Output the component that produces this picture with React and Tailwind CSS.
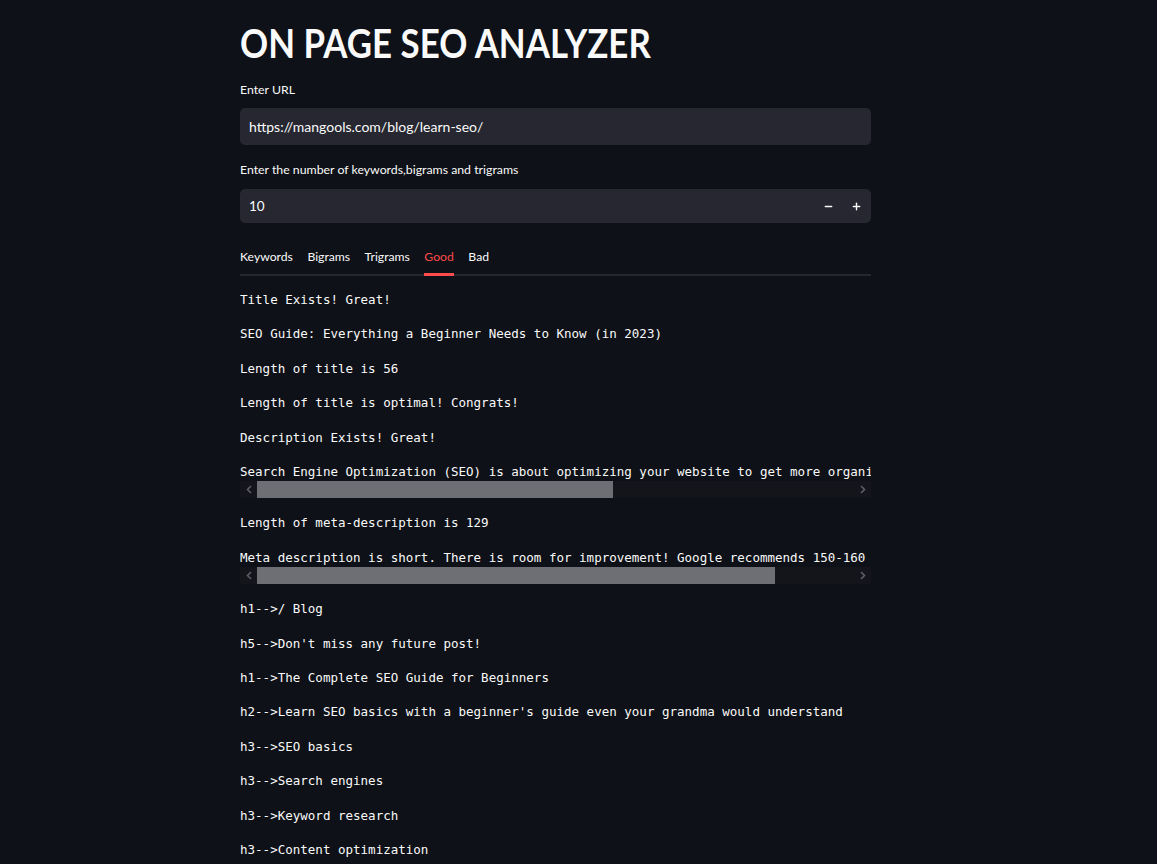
import { Minus, Plus } from 'lucide-react'

const TABS = ['Keywords', 'Bigrams', 'Trigrams', 'Good', 'Bad']

const LINES = [
  { text: 'Title Exists! Great!' },
  { text: 'SEO Guide: Everything a Beginner Needs to Know (in 2023)' },
  { text: 'Length of title is 56' },
  { text: 'Length of title is optimal! Congrats!' },
  { text: 'Description Exists! Great!' },
  {
    text: 'Search Engine Optimization (SEO) is about optimizing your website to get more organic traffic from search engines like Google.',
    thumb: 356,
  },
  { text: 'Length of meta-description is 129' },
  {
    text: 'Meta description is short. There is room for improvement! Google recommends 150-160 characters.',
    thumb: 518,
  },
  { text: 'h1-->/ Blog' },
  { text: "h5-->Don't miss any future post!" },
  { text: 'h1-->The Complete SEO Guide for Beginners' },
  { text: "h2-->Learn SEO basics with a beginner's guide even your grandma would understand" },
  { text: 'h3-->SEO basics' },
  { text: 'h3-->Search engines' },
  { text: 'h3-->Keyword research' },
  { text: 'h3-->Content optimization' },
]

const mono = { fontFamily: '"DejaVu Sans Mono", "Liberation Mono", monospace' }

function FakeScrollbar({ thumb }) {
  return (
    <div className="flex items-center h-[17px] bg-[#13151b]">
      <span className="w-[17px] flex justify-center text-[#5d5f66]">
        <svg width="6" height="9" viewBox="0 0 6 9"><path d="M5 1L1.5 4.5L5 8" stroke="currentColor" strokeWidth="1.6" fill="none" /></svg>
      </span>
      <div className="h-[17px] bg-[#6e6f74]" style={{ width: thumb }} />
      <div className="flex-1" />
      <span className="w-[17px] flex justify-center text-[#5d5f66]">
        <svg width="6" height="9" viewBox="0 0 6 9"><path d="M1 1L4.5 4.5L1 8" stroke="currentColor" strokeWidth="1.6" fill="none" /></svg>
      </span>
    </div>
  )
}

export default function App() {
  return (
    <div className="h-[864px] overflow-hidden bg-[#0e1117] text-[#fafafa]" style={{ fontFamily: 'Lato, "Noto Sans", sans-serif' }}>
      <div className="ml-[240px] w-[631px] pt-[17px]">
        <h1 className="text-[41px] font-bold leading-[52px] scale-x-[0.85] origin-left whitespace-nowrap">ON PAGE SEO ANALYZER</h1>

        <div className="mt-[12px] text-[12.3px] leading-[18px]">Enter URL</div>
        <div className="mt-[9px] h-[37px] rounded-[5px] bg-[#262730] flex items-center px-[9px] text-[14px]">
          https://mangools.com/blog/learn-seo/
        </div>

        <div className="mt-[16px] text-[12.3px] leading-[18px]">Enter the number of keywords,bigrams and trigrams</div>
        <div className="mt-[10px] h-[34px] rounded-[5px] bg-[#262730] flex items-center pl-[9px] text-[13.5px]">
          <span className="flex-1">10</span>
          <span className="w-[28px] h-full flex items-center justify-center"><Minus size={11} strokeWidth={3} /></span>
          <span className="w-[28px] h-full flex items-center justify-center mr-[1px]"><Plus size={11} strokeWidth={3} /></span>
        </div>

        <div className="mt-[25px] flex gap-[14.5px] border-b-2 border-[#262730] text-[12.2px]">
          {TABS.map(t => (
            <div
              key={t}
              className={`pb-[7px] leading-[18px] -mb-[2px] border-b-[3px] ${t === 'Good' ? 'text-[#ff4b4b] border-[#ff4b4b]' : 'border-transparent'}`}
            >
              {t}
            </div>
          ))}
        </div>

        <div className="mt-[15px] flex flex-col gap-[16px] text-[12.52px]" style={mono}>
          {LINES.map((l, i) => (
            <div key={i}>
              <div className="leading-[18.4px] whitespace-pre overflow-hidden">{l.text}</div>
              {l.thumb && <FakeScrollbar thumb={l.thumb} />}
            </div>
          ))}
        </div>
      </div>
    </div>
  )
}
